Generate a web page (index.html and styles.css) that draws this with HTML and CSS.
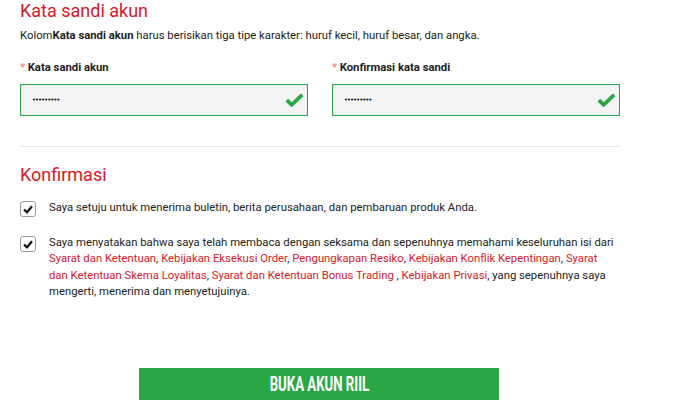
FILE: index.html
```html
<!DOCTYPE html>
<html lang="id">
<head>
  <meta charset="UTF-8">
  <title>Kata sandi akun</title>
  <link rel="stylesheet" href="styles.css">
</head>
<body>
  <div class="container">
    <section class="section">
      <h2>Kata sandi akun</h2>
      <p class="hint">Kolom<b>Kata sandi akun</b> harus berisikan tiga tipe karakter: huruf kecil, huruf besar, dan angka.</p>

      <div class="fields">
        <div class="field">
          <label for="password"><span class="req">*</span> Kata sandi akun</label>
          <div class="input-wrap">
            <input type="password" id="password" value="123456789">
            <svg class="ok" width="19" height="14" viewBox="0 0 19 14"><path d="M1.8 7.2 L6.6 11.8 L17.2 1.8" fill="none" stroke="#2aa745" stroke-width="3.8"/></svg>
          </div>
        </div>
        <div class="field">
          <label for="password2"><span class="req">*</span> Konfirmasi kata sandi</label>
          <div class="input-wrap">
            <input type="password" id="password2" value="123456789">
            <svg class="ok" width="19" height="14" viewBox="0 0 19 14"><path d="M1.8 7.2 L6.6 11.8 L17.2 1.8" fill="none" stroke="#2aa745" stroke-width="3.8"/></svg>
          </div>
        </div>
      </div>
    </section>

    <section class="section confirm">
      <h2>Konfirmasi</h2>

      <div class="check-row">
        <span class="box"><svg width="10" height="9" viewBox="0 0 10 9"><path d="M1 4.5 L4 7.3 L9 1.3" fill="none" stroke="#111" stroke-width="2.2"/></svg></span>
        <p>Saya setuju untuk menerima buletin, berita perusahaan, dan pembaruan produk Anda.</p>
      </div>

      <div class="check-row">
        <span class="box"><svg width="10" height="9" viewBox="0 0 10 9"><path d="M1 4.5 L4 7.3 L9 1.3" fill="none" stroke="#111" stroke-width="2.2"/></svg></span>
        <p>Saya menyatakan bahwa saya telah membaca dengan seksama dan sepenuhnya memahami keseluruhan isi dari <a href="#">Syarat dan Ketentuan</a>, <a href="#">Kebijakan Eksekusi Order</a>, <a href="#">Pengungkapan Resiko</a>, <a href="#">Kebijakan Konflik Kepentingan</a>, <a href="#">Syarat dan Ketentuan Skema Loyalitas</a>, <a href="#">Syarat dan Ketentuan Bonus Trading</a> , <a href="#">Kebijakan Privasi</a>, yang sepenuhnya saya mengerti, menerima dan menyetujuinya.</p>
      </div>
    </section>

    <div class="actions">
      <button type="submit"><span>BUKA AKUN RIIL</span></button>
    </div>
  </div>
</body>
</html>
```

FILE: styles.css
```css
body {
  margin: 0;
  font-family: Roboto, Arial, sans-serif;
  color: #222;
  background-color: #fff;
}

.container {
  width: 600px;
  margin-left: 20px;
}

h2 {
  margin: 0;
  font-size: 18px;
  font-weight: 400;
  line-height: 22px;
  color: #d7182a;
}

.hint {
  margin: 7px 0 0;
  font-size: 11.3px;
  line-height: 14px;
  color: #222;
}

.hint b {
  font-weight: 700;
}

.fields {
  display: flex;
  gap: 24px;
  margin-top: 18px;
  padding-bottom: 30px;
  border-bottom: 1px solid #e8e8e8;
}

.field {
  width: 288px;
}

label {
  display: block;
  font-size: 11.3px;
  font-weight: 700;
  line-height: 14px;
  color: #222;
}

.req {
  color: #e8707a;
  font-weight: 400;
}

.input-wrap {
  position: relative;
  margin-top: 9px;
}

input[type="password"] {
  display: block;
  width: 100%;
  height: 32px;
  box-sizing: border-box;
  padding: 0 11px;
  border: 1px solid #2aa745;
  background-color: #f4f4f4;
  font-family: "DejaVu Sans", sans-serif;
  font-size: 7px;
  letter-spacing: -1.1px;
  color: #111;
  outline: none;
}

.ok {
  position: absolute;
  right: 4px;
  top: 9px;
}

.confirm {
  padding-top: 17px;
}

.check-row {
  display: flex;
  align-items: flex-start;
  margin-top: 14px;
}

.check-row + .check-row {
  margin-top: 18px;
}

.box {
  flex: none;
  display: flex;
  align-items: center;
  justify-content: center;
  width: 14px;
  height: 14px;
  margin-top: 1px;
  border: 1px solid #999;
  border-radius: 3px;
  background-color: #fff;
}

.check-row p {
  max-width: 566px;
  margin: 0 0 0 13px;
  font-size: 11.3px;
  line-height: 16.4px;
  color: #222;
}

.check-row a {
  color: #d7182a;
  text-decoration: none;
}

.actions {
  margin-top: 67px;
  padding-left: 119px;
}

button[type="submit"] {
  width: 360px;
  height: 32px;
  padding: 0;
  border: none;
  background-color: #2aa745;
  color: #fff;
  font-family: Roboto, Arial, sans-serif;
  font-weight: 700;
  font-size: 20px;
  line-height: 32px;
  cursor: pointer;
}

button[type="submit"] span {
  display: inline-block;
  transform: scaleX(0.66);
}
```
